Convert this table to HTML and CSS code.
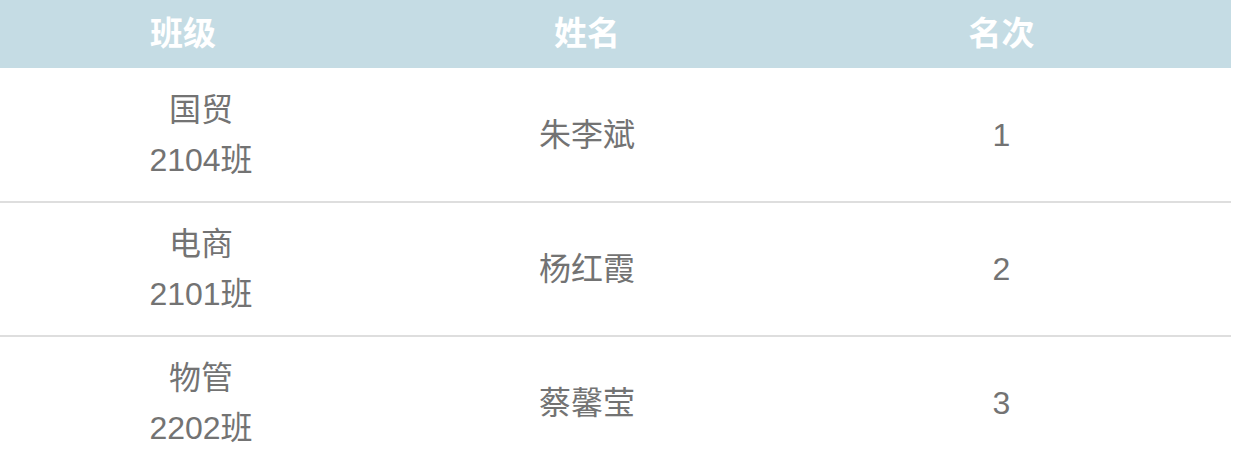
FILE: index.html
```html
<!DOCTYPE html>
<html lang="zh-CN">
<head>
<meta charset="utf-8">
<link rel="stylesheet" href="styles.css">
</head>
<body>
<table class="rank">
  <colgroup>
    <col class="c1"><col class="c2"><col class="c3">
  </colgroup>
  <thead>
    <tr><th class="h1">班级</th><th>姓名</th><th>名次</th></tr>
  </thead>
  <tbody>
    <tr><td>国贸<br>2104班</td><td>朱李斌</td><td>1</td></tr>
    <tr><td>电商<br>2101班</td><td>杨红霞</td><td>2</td></tr>
    <tr><td>物管<br>2202班</td><td>蔡馨莹</td><td>3</td></tr>
  </tbody>
</table>
</body>
</html>
```
FILE: styles.css
```css
html, body {
  margin: 0;
  padding: 0;
  background: #ffffff;
}
body {
  font-family: "Liberation Sans", "Noto Sans CJK SC", sans-serif;
}
.rank {
  width: 1231px;
  border-collapse: collapse;
  table-layout: fixed;
}
.c1 { width: 402px; }
.c2 { width: 370px; }
.c3 { width: 459px; }
.rank th {
  box-sizing: border-box;
  height: 68px;
  padding: 0 0 7px;
  background: #c5dce4;
  color: #ffffff;
  font-size: 33px;
  font-weight: 700;
  text-align: center;
  vertical-align: middle;
}
.rank th.h1 {
  padding-right: 36px;
}
.rank td {
  box-sizing: border-box;
  height: 134px;
  padding: 0;
  text-align: center;
  vertical-align: middle;
  color: #737373;
  font-size: 32px;
  line-height: 50px;
  border-bottom: 2px solid #dedede;
}
```
